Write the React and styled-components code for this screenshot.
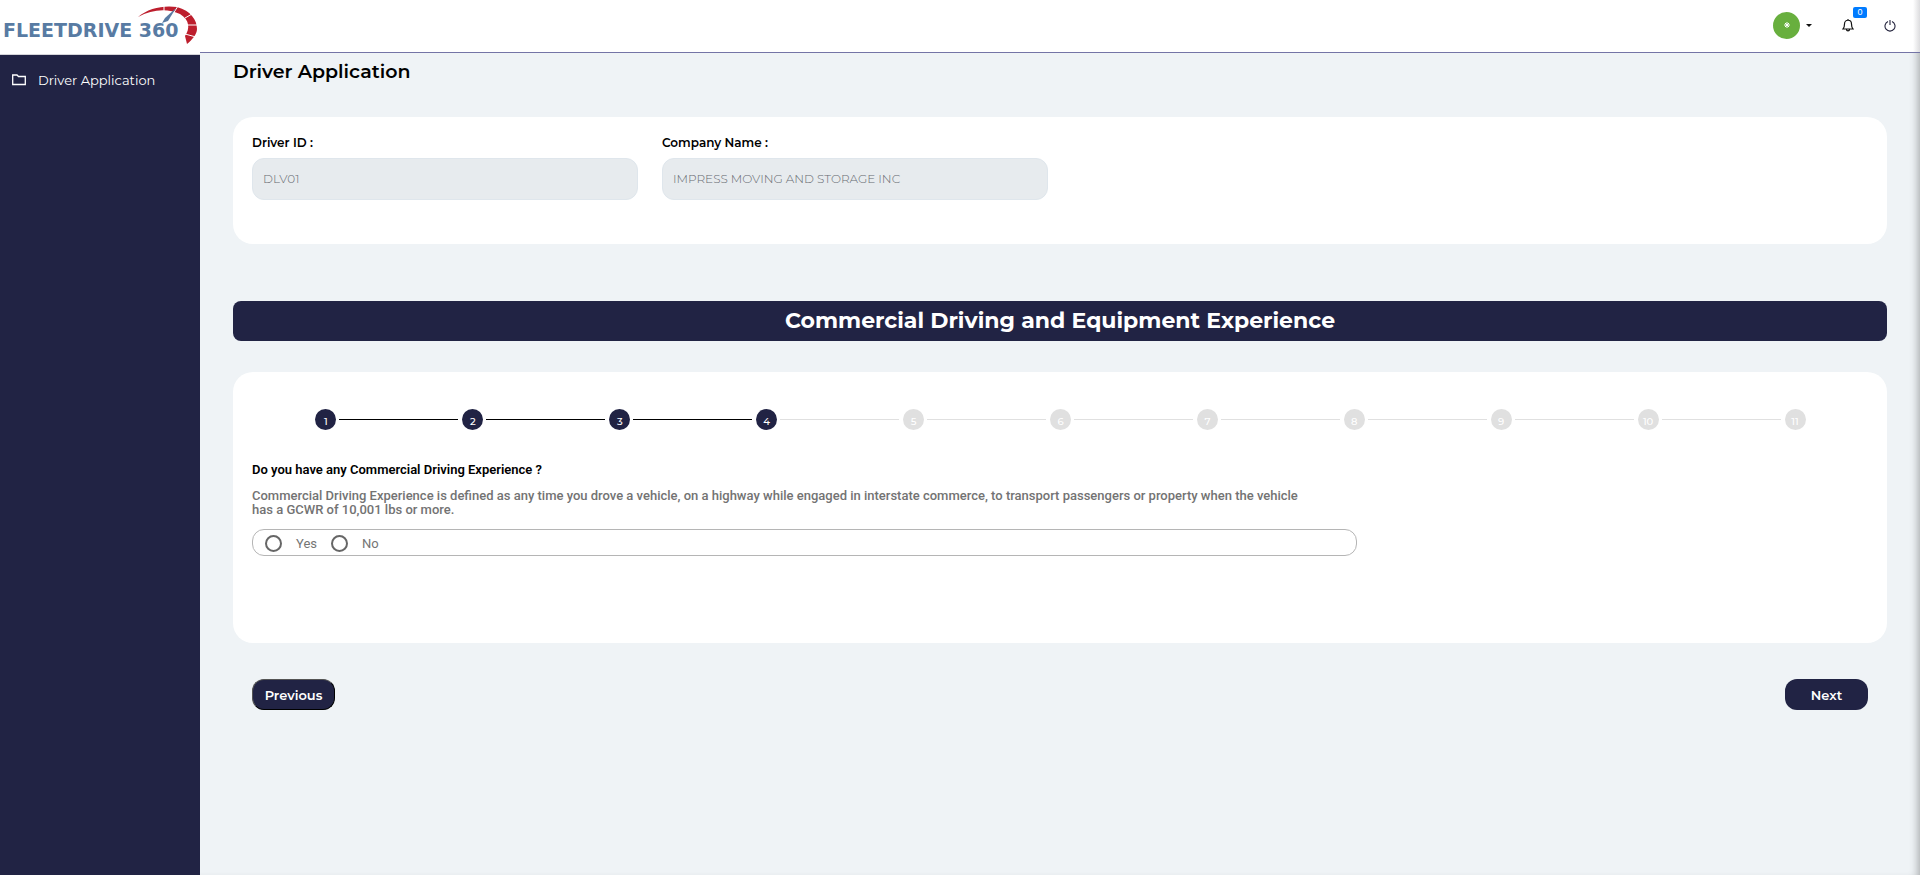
import React, { useState } from "react";
import styled, { createGlobalStyle } from "styled-components";

const navy = "#212344";

const GlobalStyle = createGlobalStyle`
  * { box-sizing: border-box; }
  body {
    margin: 0;
    background: #eff3f6;
    color: #000;
    font-family: Montserrat, Inter, "Liberation Sans", sans-serif;
    font-size: 12px;
  }
  h1, h2, p, ol, fieldset { margin: 0; padding: 0; }
`;

const Page = styled.div`
  display: flex;
  min-height: 100vh;
`;

const Sidebar = styled.aside`
  flex: 0 0 200px;
  background: ${navy};
`;

const Brand = styled.a`
  display: block;
  height: 55px;
  background: #fff;
  border-bottom: 1px solid #d5d5da;
`;

const NavLink = styled.a`
  display: flex;
  align-items: center;
  gap: 12px;
  height: 50px;
  padding: 0 12px;
  color: #fff;
  font-size: 13px;
  text-decoration: none;
`;

const Main = styled.div`
  flex: 1;
  min-width: 0;
  box-shadow: inset -8px 0 8px -6px rgba(0, 0, 0, 0.3);
`;

const TopBar = styled.header`
  display: flex;
  justify-content: flex-end;
  height: 53px;
  padding-right: 24px;
  background: linear-gradient(to left, #dcdcde, #fff 7px);
  border-bottom: 1px solid #7474a6;
`;

const Tools = styled.div`
  display: flex;
  align-items: center;
  gap: 30px;
  height: 50px;
`;

const IconButton = styled.button`
  position: relative;
  display: flex;
  align-items: center;
  gap: 6px;
  padding: 0;
  border: 0;
  background: none;
  cursor: pointer;
`;

const Avatar = styled.span`
  display: grid;
  place-items: center;
  width: 27px;
  height: 27px;
  border-radius: 50%;
  background: #68af3e;
`;

const Caret = styled.span`
  border: 3px solid transparent;
  border-top-color: #111;
  border-bottom: 0;
`;

const Badge = styled.span`
  position: absolute;
  left: 11px;
  bottom: 14px;
  width: 14px;
  height: 11px;
  border-radius: 2px;
  background: #007bff;
  color: #fff;
  font-size: 9px;
  line-height: 10px;
  text-align: center;
`;

const Content = styled.main`
  padding: 0 33px 40px;
`;

const Title = styled.h1`
  padding: 8px 0 34px;
  font-size: 19px;
  font-weight: 600;
  line-height: 22px;
`;

const Card = styled.section`
  padding: ${(p) => (p.$steps ? "37px 19px 87px" : "18px 19px 44px")};
  border-radius: 20px;
  background: #fff;
`;

const Fields = styled.div`
  display: grid;
  grid-template-columns: repeat(4, 1fr);
  gap: 24px;
`;

const Field = styled.label`
  display: grid;
  gap: 7px;
  font-weight: 600;
  line-height: 16px;
`;

const TextInput = styled.input`
  width: 100%;
  height: 42px;
  padding: 0 10px 2px;
  border: 1px solid #dfe6ec;
  border-radius: 12px;
  background: #e7ebee;
  color: #666a70;
  font: inherit;
  font-weight: 300;
`;

const Banner = styled.h2`
  margin: 57px 0 31px;
  border-radius: 8px;
  background: ${navy};
  color: #fff;
  font-size: 22px;
  font-weight: 700;
  line-height: 40px;
  text-align: center;
`;

const Stepper = styled.ol`
  display: flex;
  list-style: none;
`;

const Step = styled.li`
  display: flex;
  flex: 1;
  align-items: center;
`;

const Line = styled.span`
  flex: 1;
  height: 1px;
  margin: ${(p) => (p.$before ? "0 4px 0 0" : "0 0 0 3px")};
  background: ${(p) => p.$color};
`;

const Dot = styled.span`
  width: 21px;
  height: 21px;
  padding-top: 4px;
  border-radius: 50%;
  background: ${(p) => (p.$done ? navy : "#e0e0e0")};
  color: #fff;
  font-size: 10px;
  font-weight: 500;
  line-height: 17px;
  text-align: center;
`;

const Question = styled.fieldset`
  max-width: 1105px;
  margin-top: 32px;
  border: 0;
  color: #737373;
  font-family: Roboto, "Liberation Sans", sans-serif;
  font-size: 13px;
  line-height: 14px;
`;

const Legend = styled.legend`
  padding: 0;
  color: #000;
  font-weight: 600;
  line-height: 16px;
`;

const Hint = styled.p`
  padding: 11px 40px 12px 0;
  font-weight: 500;
`;

const Options = styled.div`
  display: flex;
  align-items: center;
  gap: 14px;
  height: 27px;
  padding: 2px 12px 0;
  border: 1px solid #b5b5b5;
  border-radius: 12px;
`;

const Option = styled.label`
  display: flex;
  align-items: center;
  gap: 14px;
  color: #757575;
`;

const Radio = styled.input`
  appearance: none;
  width: 17px;
  height: 17px;
  margin: 0;
  border: 2px solid #666;
  border-radius: 50%;
  &:checked { background: radial-gradient(${navy} 4px, transparent 5px); }
`;

const Actions = styled.div`
  display: flex;
  justify-content: space-between;
  padding: 36px 19px 0;
`;

const ActionButton = styled.button`
  width: 83px;
  height: 31px;
  padding: 0;
  border: ${(p) => (p.$raised ? "1px outset #000" : "0")};
  border-radius: 12px;
  background: ${navy};
  color: #fff;
  font: inherit;
  font-size: 13px;
  font-weight: 600;
`;

const Logo = () => (
  <svg width="200" height="54" viewBox="0 0 200 54" role="img" aria-label="Fleetdrive 360">
    <text x="3" y="37" fill="#587ba3" fontFamily="DejaVu Sans" fontWeight="700" fontSize="19">FLEETDRIVE 360</text>
    <path d="M138 17C148 8 164 5 177 7C191 11 197 20 197 29C197 34 192 40 187 44L185 36C190 29 190 20 180 14C168 8 152 9 138 17Z" fill="#bd1e2d" />
    <path d="M164 5V11M178 6L173 14M192 14L185 18M198 25H188M196 37L185 34" stroke="#fff" strokeWidth="1" />
    <path d="M176 8L168 21L162 23L165 18Z" fill="#587ba3" />
  </svg>
);

const FolderIcon = () => (
  <svg width="14" height="12" viewBox="0 0 14 12" fill="none" stroke="#fff" aria-hidden="true">
    <path d="M.7 10.500V1H5L6.500 2.500H13.300V10.500Z" strokeWidth="1.300" />
  </svg>
);

const StarIcon = () => (
  <svg width="8" height="8" viewBox="0 0 8 8" stroke="#fff" aria-hidden="true">
    <path d="M4 1V7M1 4H7M2 2L6 6M6 2L2 6" />
  </svg>
);

const BellIcon = () => (
  <svg width="12" height="14" viewBox="0 0 12 14" fill="none" stroke="#111" strokeWidth="1.200" aria-hidden="true">
    <path d="M1 11C2.500 9.500 2.500 8 2.500 6C2.500 1 9.500 1 9.500 6C9.500 8 9.500 9.500 11 11ZM4.500 11.500C4.500 13.300 7.500 13.300 7.500 11.500M6 1V2.500" />
  </svg>
);

const PowerIcon = () => (
  <svg width="12" height="13" viewBox="0 0 12 13" fill="none" stroke="#22223c" strokeWidth="1.100" aria-hidden="true">
    <path d="M4 2.500A5 5 0 1 0 8 2.500M6 1V6" />
  </svg>
);

const STEP_COUNT = 11;
const CURRENT_STEP = 4;
const lineColor = (from) => {
  if (from < 1 || from >= STEP_COUNT) return "transparent";
  return from < CURRENT_STEP ? "#000" : "#e0e0e0";
};

export default function App() {
  const [answer, setAnswer] = useState("");
  return (
    <>
      <GlobalStyle />
      <Page>
        <Sidebar>
          <Brand href="#home"><Logo /></Brand>
          <nav>
            <NavLink href="#application"><FolderIcon />Driver Application</NavLink>
          </nav>
        </Sidebar>
        <Main>
          <TopBar>
            <Tools>
              <IconButton aria-label="Account"><Avatar><StarIcon /></Avatar><Caret /></IconButton>
              <IconButton aria-label="Notifications"><BellIcon /><Badge>0</Badge></IconButton>
              <IconButton aria-label="Log out"><PowerIcon /></IconButton>
            </Tools>
          </TopBar>
          <Content>
            <Title>Driver Application</Title>
            <Card>
              <Fields>
                <Field>Driver ID :<TextInput readOnly value="DLV01" /></Field>
                <Field>Company Name :<TextInput readOnly value="IMPRESS MOVING AND STORAGE INC" /></Field>
              </Fields>
            </Card>
            <Banner>Commercial Driving and Equipment Experience</Banner>
            <Card $steps>
              <Stepper>
                {Array.from({ length: STEP_COUNT }, (_, i) => i + 1).map((n) => (
                  <Step key={n}>
                    <Line $before $color={lineColor(n - 1)} />
                    <Dot $done={n <= CURRENT_STEP}>{n}</Dot>
                    <Line $color={lineColor(n)} />
                  </Step>
                ))}
              </Stepper>
              <Question>
                <Legend>Do you have any Commercial Driving Experience ?</Legend>
                <Hint>
                  Commercial Driving Experience is defined as any time you drove a vehicle, on a highway while engaged in interstate commerce, to transport passengers or property when the vehicle has a GCWR of 10,001 lbs or more.
                </Hint>
                <Options>
                  {["Yes", "No"].map((v) => (
                    <Option key={v}>
                      <Radio type="radio" name="experience" value={v} checked={answer === v} onChange={() => setAnswer(v)} />
                      {v}
                    </Option>
                  ))}
                </Options>
              </Question>
            </Card>
            <Actions>
              <ActionButton type="button" $raised>Previous</ActionButton>
              <ActionButton type="button">Next</ActionButton>
            </Actions>
          </Content>
        </Main>
      </Page>
    </>
  );
}
